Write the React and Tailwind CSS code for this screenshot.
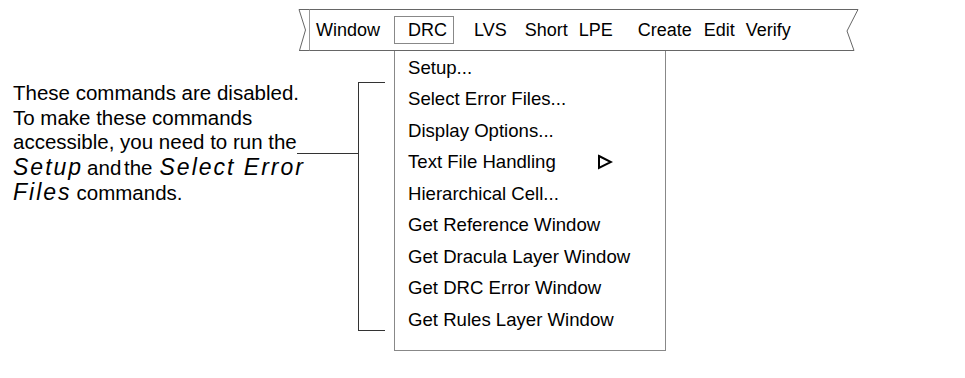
const menuItems = [
  "Setup...",
  "Select Error Files...",
  "Display Options...",
  "Text File Handling",
  "Hierarchical Cell...",
  "Get Reference Window",
  "Get Dracula Layer Window",
  "Get DRC Error Window",
  "Get Rules Layer Window",
];

const MenuBar = () => (
  <div className="relative ml-[298px] mt-[9px] w-[561px] h-[42px]">
    {/* banner frame with folded ends */}
    <svg className="absolute inset-0" width="561" height="42" viewBox="0 0 561 42">
      <polyline points="1,0.5 560,0.5" fill="none" stroke="#666" strokeWidth="1" />
      <polyline points="1,41.5 556,41.5" fill="none" stroke="#666" strokeWidth="1" />
      <polyline points="1,0.5 7.5,21 1.5,41.5" fill="none" stroke="#666" strokeWidth="1" />
      <line x1="11.5" y1="0.5" x2="11.5" y2="41.5" stroke="#999" strokeWidth="1" />
      <polyline points="560,0.5 549,22 556,41.5" fill="none" stroke="#666" strokeWidth="1" />
    </svg>
    <div className="relative flex items-center h-full pl-[18px] text-[18px] text-black">
      <span>Window</span>
      <span className="ml-[14px] w-[60px] h-[28px] flex items-center pl-[13px] border border-[#888]">DRC</span>
      <span className="ml-[20px]">LVS</span>
      <span className="ml-[18px]">Short</span>
      <span className="ml-[11px]">LPE</span>
      <span className="ml-[25px]">Create</span>
      <span className="ml-[12px]">Edit</span>
      <span className="ml-[11px]">Verify</span>
    </div>
  </div>
);

const Note = () => (
  <div className="w-[358px] pl-[13px] pt-[30px] text-[20.5px] leading-[24.5px] text-black">
    <div>These commands are disabled.</div>
    <div>To make these commands</div>
    <div className="flex">
      <span>accessible, you need to run the</span>
      <div className="flex-1 self-end mb-[1px] h-px bg-[#333]" />
    </div>
    <div className="flex items-baseline whitespace-nowrap">
      <i className="text-[23px] tracking-[2px]">Setup</i>
      <span className="text-[20.5px] [word-spacing:-3px] ml-[4px]">and the</span>
      <i className="text-[23px] tracking-[2px] ml-[7px]">Select Error</i>
    </div>
    <div className="flex items-baseline whitespace-nowrap">
      <i className="text-[23px] tracking-[2px]">Files</i>
      <span className="ml-[5px]">commands.</span>
    </div>
  </div>
);

const DrcMenu = () => (
  <div className="ml-[9px] w-[272px] h-[300px] border-x border-b border-[#888] pt-[1px] pl-[13px] text-[18.6px] text-black">
    {menuItems.map((item) => (
      <div key={item} className="h-[31.5px] flex items-center">
        <span>{item}</span>
        {item === "Text File Handling" && (
          <svg className="ml-[41px]" width="16" height="16" viewBox="0 0 16 16">
            <polygon points="2,2 14,8 2,14" fill="none" stroke="#000" strokeWidth="2" strokeLinejoin="miter" />
          </svg>
        )}
      </div>
    ))}
  </div>
);

export default function App() {
  return (
    <div className="w-[965px] h-[378px] bg-white overflow-hidden font-['Liberation_Sans',Arial,sans-serif]">
      <MenuBar />
      <div className="flex">
        <Note />
        <div className="w-[27px] mt-[31px] h-[249px] border-y border-l border-[#333]" />
        <DrcMenu />
      </div>
    </div>
  );
}
